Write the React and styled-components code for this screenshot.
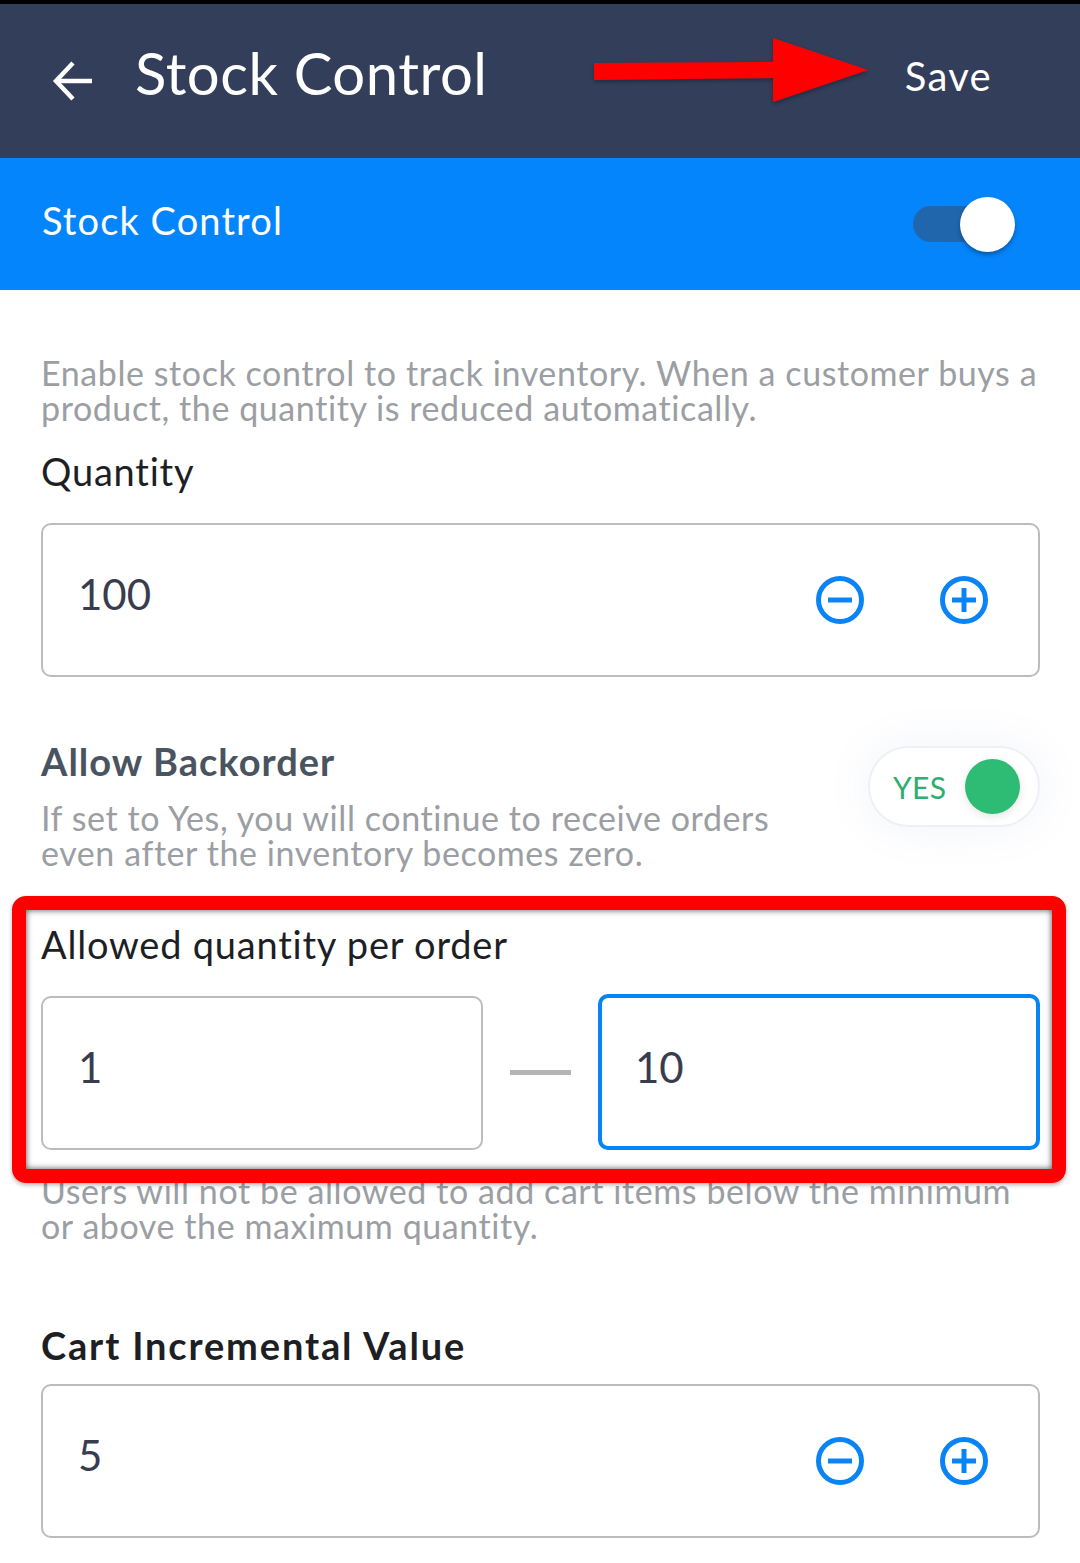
import React from "react";
import styled, { createGlobalStyle } from "styled-components";

const Global = createGlobalStyle`
  html, body { margin: 0; padding: 0; background: #fff; }
  body { font-family: "Lato", "Open Sans", sans-serif; width: 1080px; height: 1563px; overflow: hidden; }
`;

const Page = styled.div`
  position: relative;
  width: 1080px;
  height: 1563px;
  overflow: hidden;
  background: #fff;
`;

const Header = styled.header`
  box-sizing: border-box;
  height: 158px;
  border-top: 4px solid #000;
  background: #323e5a;
  color: #fff;
  display: flex;
  align-items: flex-start;
  padding: 0 88px 0 52px;
`;

const BackIcon = styled.svg`
  width: 42px;
  height: 42px;
  margin-top: 55px;
  flex: none;
`;

const Title = styled.h1`
  margin: 32px 0 0 41px;
  font-size: 58px;
  line-height: 74px;
  font-weight: 400;
  letter-spacing: 0.5px;
  white-space: nowrap;
`;

const SaveLink = styled.span`
  margin: 48px 0 0 auto;
  font-size: 40px;
  line-height: 48px;
  letter-spacing: 1.3px;
`;

const Band = styled.div`
  box-sizing: border-box;
  height: 132px;
  background: #0585fb;
  color: #fff;
  display: flex;
  align-items: flex-start;
  justify-content: space-between;
  padding: 0 65px 0 42px;
`;

const BandTitle = styled.span`
  margin-top: 39px;
  font-size: 38px;
  line-height: 46px;
  letter-spacing: 1.1px;
`;

const BandSwitch = styled.div`
  position: relative;
  margin-top: 48px;
  width: 102px;
  height: 36px;
  display: flex;
  justify-content: flex-end;
  align-items: center;
`;

const BandTrack = styled.div`
  position: absolute;
  left: 0;
  top: 0;
  width: 70px;
  height: 36px;
  border-radius: 18px;
  background: #1f66ad;
`;

const BandKnob = styled.div`
  position: relative;
  width: 55px;
  height: 55px;
  border-radius: 50%;
  background: #fff;
  box-shadow: 0 3px 4px rgba(0, 40, 90, 0.45);
`;

const Content = styled.main`
  padding: 0 40px 0 41px;
`;

const Description = styled.p`
  margin: ${(p) => p.$top}px 0 0;
  font-size: 34px;
  line-height: 35px;
  letter-spacing: 0.58px;
  color: #9b9ea3;
  width: ${(p) => p.$width || "1000px"};
`;

const Label = styled.div`
  margin-top: ${(p) => p.$top}px;
  font-size: 38px;
  line-height: 46px;
  letter-spacing: ${(p) => p.$spacing || 0.78}px;
  font-weight: ${(p) => (p.$bold ? 700 : 400)};
  color: ${(p) => p.$color || "#1d1f24"};
`;

const Field = styled.div`
  box-sizing: border-box;
  height: 154px;
  margin-top: ${(p) => p.$top || 0}px;
  border: 2px solid #bcbcbc;
  border-radius: 10px;
  background: #fff;
  display: flex;
  align-items: flex-start;
  padding: 0 50px 0 35px;
`;

const FieldValue = styled.span`
  display: block;
  margin-top: 39px;
  font-size: 42px;
  line-height: 60px;
  color: #393c4e;
`;

const Steppers = styled.div`
  margin-left: auto;
  margin-top: 51px;
  display: flex;
  gap: 76px;
`;

const StepIcon = styled.svg`
  width: 48px;
  height: 48px;
  display: block;
`;

const BackorderRow = styled.div`
  display: flex;
  align-items: flex-start;
  justify-content: space-between;
  margin-top: 69px;
  height: 127px;
`;

const BackorderText = styled.div`
  width: 760px;
`;

const YesToggle = styled.div`
  box-sizing: border-box;
  width: 172px;
  height: 81px;
  border: 2px solid #edf1f7;
  border-radius: 41px;
  background: #fff;
  box-shadow: 0 0 44px rgba(120, 135, 190, 0.1);
  display: flex;
  align-items: center;
  justify-content: space-between;
  padding: 0 18px 0 23px;
`;

const YesText = styled.span`
  font-size: 30px;
  letter-spacing: 0.4px;
  color: #2fae72;
`;

const YesKnob = styled.div`
  width: 55px;
  height: 55px;
  border-radius: 50%;
  background: #2ebb74;
  box-shadow: 0 3px 10px rgba(0, 0, 0, 0.1);
`;

const RangeRow = styled.div`
  display: flex;
  align-items: flex-end;
  margin-top: 27px;
`;

const RangeField = styled.div`
  box-sizing: border-box;
  flex: none;
  width: 442px;
  height: ${(p) => (p.$active ? 156 : 154)}px;
  border: ${(p) => (p.$active ? "4px solid #0585f5" : "2px solid #bcbcbc")};
  border-radius: 10px;
  padding-left: ${(p) => (p.$active ? 33 : 35)}px;
  display: flow-root;
`;

const Dash = styled.div`
  align-self: center;
  width: 61px;
  height: 5px;
  margin: 0 27px;
  background: #b5b5b5;
`;

const Annotation = styled.svg`
  position: absolute;
  left: 590px;
  top: 34px;
  width: 290px;
  height: 76px;
  overflow: visible;
`;

const RedFrame = styled.div`
  position: absolute;
  left: 12px;
  top: 896px;
  box-sizing: border-box;
  width: 1054px;
  height: 287px;
  border: 14.5px solid #fe0000;
  border-radius: 14px;
  box-shadow: 0 2px 4px rgba(0, 0, 0, 0.3), inset 0 0 6px rgba(0, 0, 0, 0.7);
`;

const Step = ({ plus }) => (
  <StepIcon viewBox="0 0 48 48" fill="none" stroke="#0a84f5" strokeWidth="5">
    <circle cx="24" cy="24" r="21.5" />
    <path d="M12 24h24" />
    {plus && <path d="M24 12v24" />}
  </StepIcon>
);

export default function App() {
  return (
    <Page>
      <Global />
      <Header>
        <BackIcon viewBox="0 0 42 42" fill="none" stroke="#fff" strokeWidth="4.5">
          <path d="M40 22H5" />
          <path d="M21 4 4 22l17 18" />
        </BackIcon>
        <Title>Stock Control</Title>
        <SaveLink>Save</SaveLink>
      </Header>
      <Band>
        <BandTitle>Stock Control</BandTitle>
        <BandSwitch>
          <BandTrack />
          <BandKnob />
        </BandSwitch>
      </Band>
      <Content>
        <Description $top={65}>
          Enable stock control to track inventory. When a customer buys a product, the quantity is reduced automatically.
        </Description>
        <Label $top={23}>Quantity</Label>
        <Field $top={29}>
          <FieldValue>100</FieldValue>
          <Steppers>
            <Step />
            <Step plus />
          </Steppers>
        </Field>
        <BackorderRow>
          <BackorderText>
            <Label $top={-8} $bold $spacing={1.03} $color="#4a5460">Allow Backorder</Label>
            <Description $top={16} $width="760px">
              If set to Yes, you will continue to receive orders even after the inventory becomes zero.
            </Description>
          </BackorderText>
          <YesToggle>
            <YesText>YES</YesText>
            <YesKnob />
          </YesToggle>
        </BackorderRow>
        <Label $top={48}>Allowed quantity per order</Label>
        <RangeRow>
          <RangeField>
            <FieldValue>1</FieldValue>
          </RangeField>
          <Dash />
          <RangeField $active>
            <FieldValue>10</FieldValue>
          </RangeField>
        </RangeRow>
        <Description $top={23}>
          Users will not be allowed to add cart items below the minimum or above the maximum quantity.
        </Description>
        <Label $top={79} $bold $spacing={1.85}>Cart Incremental Value</Label>
        <Field $top={16}>
          <FieldValue>5</FieldValue>
          <Steppers>
            <Step />
            <Step plus />
          </Steppers>
        </Field>
      </Content>
      <Annotation viewBox="0 0 290 76">
        <defs>
          <filter id="sh" x="-10%" y="-20%" width="120%" height="150%">
            <feDropShadow dx="0" dy="2" stdDeviation="2" floodColor="#000" floodOpacity="0.35" />
          </filter>
        </defs>
        <path
          d="M4 29 183 28V4L278 36 183 68V44L4 46Z"
          fill="#fe0000"
          filter="url(#sh)"
        />
      </Annotation>
      <RedFrame />
    </Page>
  );
}
